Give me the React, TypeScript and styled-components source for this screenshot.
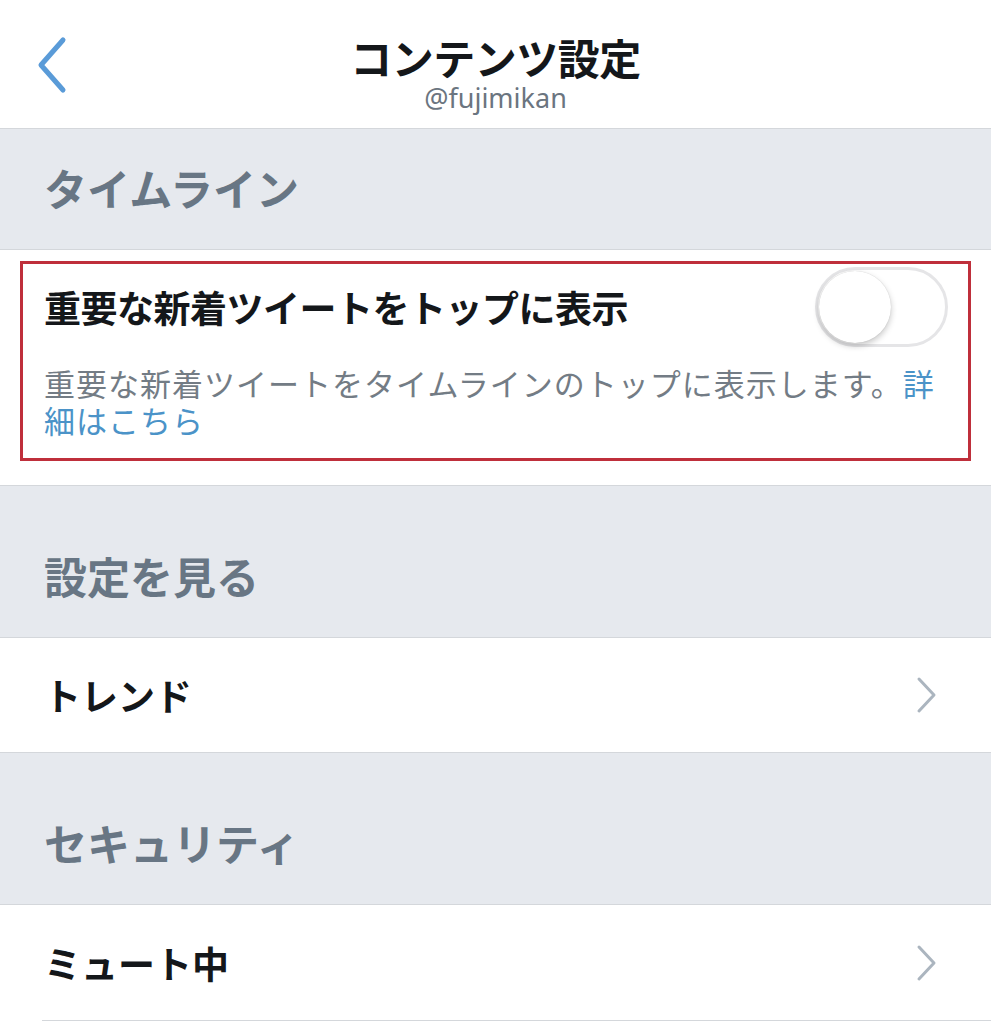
import styled, { createGlobalStyle } from 'styled-components';

const GlobalStyle = createGlobalStyle`
  html, body {
    margin: 0;
    padding: 0;
    background: #ffffff;
  }
  body {
    font-family: "Noto Sans CJK JP", "Noto Sans", sans-serif;
  }
`;

const Page = styled.div`
  width: 991px;
  min-height: 1024px;
  background: #ffffff;
  overflow: hidden;
`;

const Header = styled.header`
  position: relative;
  height: 129px;
  display: flex;
  flex-direction: column;
  align-items: center;
  border-bottom: 1px solid #d4d7db;
  box-sizing: border-box;
`;

const BackButton = styled.button`
  position: absolute;
  left: 34px;
  top: 34px;
  width: 36px;
  height: 62px;
  padding: 0;
  border: none;
  background: none;
  display: flex;
  align-items: center;
  justify-content: center;
`;

const Title = styled.h1`
  margin: 32px 0 0;
  font-size: 42px;
  line-height: 50px;
  font-weight: 700;
  color: #14171a;
  letter-spacing: -0.5px;
`;

const Subtitle = styled.div`
  font-family: "Noto Sans", sans-serif;
  font-size: 27px;
  line-height: 32px;
  color: #6b7580;
`;

const SectionHeader = styled.div<{ $first?: boolean }>`
  height: ${(p) => (p.$first ? 121 : 152)}px;
  background: #e6e9ee;
  display: flex;
  align-items: flex-end;
  padding: 0 44px 36px;
  box-sizing: border-box;
  border-bottom: 1px solid #d4d7db;
  font-size: 43px;
  line-height: 52px;
  font-weight: 700;
  color: #687684;
`;

const WhiteBlock = styled.div`
  background: #ffffff;
  padding: 11px 20px 24px;
  border-bottom: 1px solid #d4d7db;
`;

const Highlight = styled.div`
  border: 3px solid #bf2f3b;
  padding: 3px 20px 20px 21px;
`;

const TopLine = styled.div`
  display: flex;
  align-items: center;
  justify-content: space-between;
`;

const SettingTitle = styled.div`
  font-size: 37px;
  line-height: 48px;
  font-weight: 700;
  color: #14171a;
  letter-spacing: -0.5px;
`;

const Track = styled.div`
  width: 133px;
  height: 80px;
  border-radius: 40px;
  box-sizing: border-box;
  border: 3px solid #e5e5e7;
  background: #ffffff;
  display: flex;
  align-items: center;
  padding-left: 1px;
`;

const Knob = styled.div`
  width: 72px;
  height: 72px;
  border-radius: 50%;
  background: #ffffff;
  box-shadow: 0 3px 6px rgba(0, 0, 0, 0.22), 0 0 1px rgba(0, 0, 0, 0.2);
`;

const Description = styled.p`
  margin: 17px 0 0;
  font-size: 31px;
  line-height: 37px;
  letter-spacing: 1px;
  color: #737c85;
`;

const Link = styled.span`
  color: #4b93c8;
`;

const Row = styled.div`
  height: 115px;
  display: flex;
  align-items: center;
  justify-content: space-between;
  padding: 0 52px 0 44px;
  box-sizing: border-box;
  border-bottom: 1px solid #d4d7db;
  background: #ffffff;
`;

const LastRow = styled(Row)`
  border-bottom: none;
`;

const Divider = styled.div`
  margin-left: 42px;
  height: 1px;
  background: #d4d7db;
`;

const RowLabel = styled.div`
  font-size: 37px;
  line-height: 48px;
  font-weight: 700;
  color: #14171a;
`;

const Chevron = () => (
  <svg width="24" height="38" viewBox="0 0 24 38">
    <polyline points="4,3 19,19 4,35" fill="none" stroke="#abb5bf" strokeWidth="3" strokeLinecap="round" strokeLinejoin="round" />
  </svg>
);

const BackIcon = () => (
  <svg width="34" height="60" viewBox="0 0 34 60">
    <polyline points="28,5 6,30 28,55" fill="none" stroke="#5a9bd8" strokeWidth="5" strokeLinecap="round" strokeLinejoin="round" />
  </svg>
);

export default function App() {
  return (
    <Page>
      <GlobalStyle />
      <Header>
        <BackButton aria-label="戻る">
          <BackIcon />
        </BackButton>
        <Title>コンテンツ設定</Title>
        <Subtitle>@fujimikan</Subtitle>
      </Header>

      <SectionHeader $first>タイムライン</SectionHeader>
      <WhiteBlock>
        <Highlight>
          <TopLine>
            <SettingTitle>重要な新着ツイートをトップに表示</SettingTitle>
            <Track>
              <Knob />
            </Track>
          </TopLine>
          <Description>
            重要な新着ツイートをタイムラインのトップに表示します。<Link>詳細はこちら</Link>
          </Description>
        </Highlight>
      </WhiteBlock>

      <SectionHeader>設定を見る</SectionHeader>
      <Row>
        <RowLabel>トレンド</RowLabel>
        <Chevron />
      </Row>

      <SectionHeader>セキュリティ</SectionHeader>
      <LastRow>
        <RowLabel>ミュート中</RowLabel>
        <Chevron />
      </LastRow>
      <Divider />
    </Page>
  );
}
